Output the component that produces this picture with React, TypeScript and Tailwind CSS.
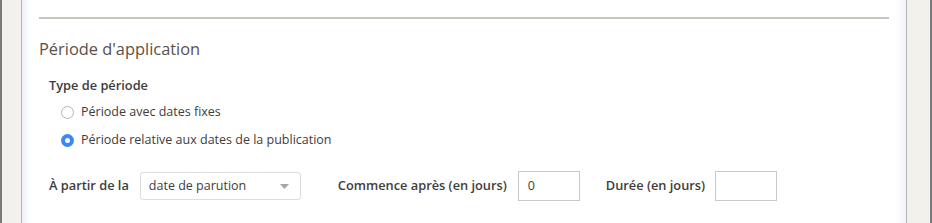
import React from 'react';

const App: React.FC = () => {
  return (
    <div className="flex h-[223px] w-[932px] overflow-hidden bg-[#f2f1ec] font-['Open_Sans',sans-serif] text-[#3d3d3d]">
      <div className="w-[2px] shrink-0 bg-[#7a7a7a]" />
      <div className="w-[19px] shrink-0" />
      <div className="w-px shrink-0 bg-[#b4b4ae]" />
      <div className="relative flex-1 bg-white">
        <div className="pointer-events-none absolute inset-y-0 left-0 w-[8px] bg-gradient-to-r from-[#eef0f4] to-white" />
        <div className="pointer-events-none absolute inset-y-0 right-0 w-[12px] bg-gradient-to-l from-[#f3f4f7] to-white" />
        <div className="relative pl-[17px] pr-[17px] pt-[17px]">
          <div className="h-[2px] bg-[#c6c6bf]" />
          <h2 className="mt-[19px] text-[16.4px] leading-[22px] text-[#5b514c]">Période d'application</h2>
          <div className="mt-[16px] pl-[10px]">
            <div className="text-[12.8px] font-semibold leading-[18px] text-[#3d3d3d]">Type de période</div>
            <div className="mt-[9px] flex flex-col gap-[10px] pl-[12px]">
              <label className="flex items-center gap-[7px] text-[12.5px] leading-[18px]">
                <span className="h-[13px] w-[13px] rounded-full border border-[#b5b5b5] bg-white" />
                Période avec dates fixes
              </label>
              <label className="flex items-center gap-[7px] text-[12.5px] leading-[18px]">
                <span className="flex h-[13px] w-[13px] items-center justify-center rounded-full bg-[#3b88f5]">
                  <span className="h-[5px] w-[5px] rounded-full bg-white" />
                </span>
                Période relative aux dates de la publication
              </label>
            </div>
            <div className="mt-[22px] flex items-center">
              <span className="text-[12.8px] font-semibold text-[#3d3d3d]">À partir de la</span>
              <div className="ml-[11px] flex h-[28px] w-[161px] items-center justify-between rounded-[3px] border border-[#dcdcdc] pl-[8px] pr-[11px] text-[12.5px]">
                <span>date de parution</span>
                <svg width="9" height="5" viewBox="0 0 9 5">
                  <path d="M0 0 L9 0 L4.5 5 Z" fill="#a6a6a6" />
                </svg>
              </div>
              <span className="ml-[37px] text-[12.8px] font-semibold text-[#3d3d3d]">Commence après (en jours)</span>
              <div className="ml-[11px] flex h-[30px] w-[62px] items-center border border-[#c9c9c9] pl-[9px] text-[12.5px]">0</div>
              <span className="ml-[26px] text-[12.8px] font-semibold text-[#3d3d3d]">Durée (en jours)</span>
              <div className="ml-[10px] h-[30px] w-[62px] border border-[#c9c9c9]" />
            </div>
          </div>
        </div>
      </div>
      <div className="w-px shrink-0 bg-[#b4b4ae]" />
      <div className="w-[23px] shrink-0" />
      <div className="w-[2px] shrink-0 bg-[#7a7a7a]" />
    </div>
  );
};

export default App;
